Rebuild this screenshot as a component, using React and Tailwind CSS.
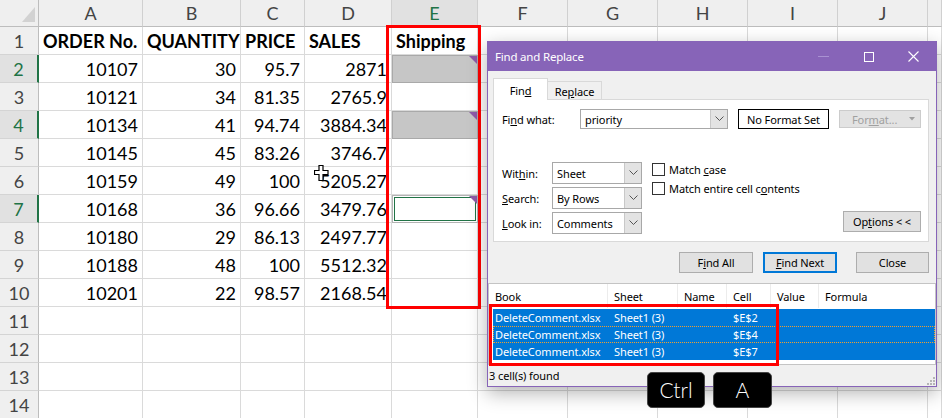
import React from 'react';

const HEADERS = ['A', 'B', 'C', 'D', 'E', 'F', 'G', 'H', 'I', 'J', ''];
const DATA = [
  ['ORDER No.', 'QUANTITY', 'PRICE', 'SALES', 'Shipping'],
  ['10107', '30', '95.7', '2871'],
  ['10121', '34', '81.35', '2765.9'],
  ['10134', '41', '94.74', '3884.34'],
  ['10145', '45', '83.26', '3746.7'],
  ['10159', '49', '100', '5205.27'],
  ['10168', '36', '96.66', '3479.76'],
  ['10180', '29', '86.13', '2497.77'],
  ['10188', '48', '100', '5512.32'],
  ['10201', '22', '98.57', '2168.54'],
];
const SELECTED_ROWS = [2, 4, 7];

function Triangle() {
  return (
    <svg className="absolute right-0 top-0" width="8" height="8" viewBox="0 0 8 8">
      <polygon points="0,0 8,0 8,8" fill="#8e5aa8" />
    </svg>
  );
}

function ECell({ r }) {
  if (r === 2 || r === 4) {
    return (
      <div className="relative bg-[#c6c6c6] border border-[#a9a9a9]">
        <Triangle />
      </div>
    );
  }
  if (r === 7) {
    return (
      <div className="relative border border-[#b4b4b4] p-px">
        <div className="h-full border border-[#217346]" />
        <Triangle />
      </div>
    );
  }
  if (r === 1) {
    return (
      <div className="border-r border-b border-[#dadada] flex items-center pl-[4px] pt-[2px] font-bold">Shipping</div>
    );
  }
  return <div className="border-r border-b border-[#dadada]" />;
}

function Sheet() {
  const rows = [];
  for (let r = 1; r <= 14; r++) {
    const sel = SELECTED_ROWS.includes(r);
    const vals = DATA[r - 1] || [];
    rows.push(
      <div
        key={'h' + r}
        className={
          sel
            ? 'flex items-center justify-center pt-[2px] bg-[#e1e1e1] text-[#217346] border-r-2 border-r-[#217346] border-b border-b-[#d4d4d4]'
            : 'flex items-center justify-center pt-[2px] bg-[#efefef] text-[#444] border-r border-r-[#bdbdbd] border-b border-b-[#d4d4d4]'
        }
      >
        {r}
      </div>
    );
    for (let c = 0; c < 11; c++) {
      if (c === 4) {
        rows.push(<ECell key={r + '-' + c} r={r} />);
        continue;
      }
      const v = vals[c];
      rows.push(
        <div
          key={r + '-' + c}
          className={
            r === 1
              ? 'border-r border-b border-[#dadada] flex items-center pl-[4px] pt-[2px] font-bold whitespace-nowrap overflow-hidden'
              : 'border-r border-b border-[#dadada] flex items-center justify-end pr-[4px] pt-[2px] whitespace-nowrap overflow-hidden'
          }
        >
          {v}
        </div>
      );
    }
  }
  return (
    <div className="grid grid-cols-[39px_104px_98px_64px_87px_86px_90px_90px_90px_90px_90px_14px] grid-rows-[27px_repeat(14,28px)] font-['Lato',sans-serif] text-[18px] text-black">
      <div className="relative bg-[#efefef] border-r border-r-[#bdbdbd] border-b border-b-[#bdbdbd]">
        <svg className="absolute left-0 top-0" width="39" height="27" viewBox="0 0 39 27">
          <polygon points="22,22 35,22 35,7" fill="#d2d2d2" />
        </svg>
      </div>
      {HEADERS.map((h, i) => (
        <div
          key={'c' + i}
          className={
            h === 'E'
              ? 'flex items-center justify-center pt-[1px] bg-[#e1e1e1] text-[#217346] border-r border-r-[#d0d0d0] border-b border-b-[#bdbdbd]'
              : 'flex items-center justify-center pt-[1px] bg-[#efefef] text-[#444] border-r border-r-[#d0d0d0] border-b border-b-[#bdbdbd]'
          }
        >
          {h}
        </div>
      ))}
      {rows}
    </div>
  );
}

function Chevron() {
  return (
    <svg width="9" height="6" viewBox="0 0 9 6">
      <polyline points="0.5,0.5 4.5,4.5 8.5,0.5" fill="none" stroke="#555" strokeWidth="1" />
    </svg>
  );
}

function Select({ value }) {
  return (
    <div className="w-[90px] h-[22px] border border-[#a8a8a8] bg-white flex">
      <div className="flex-1 flex items-center pl-[4px]">{value}</div>
      <div className="w-[17px] bg-[#e3e3e3] border-l border-[#c8c8c8] flex items-center justify-center">
        <Chevron />
      </div>
    </div>
  );
}

function Btn({ children, w, active }) {
  return (
    <div
      className={
        active
          ? 'h-[21px] flex items-center justify-center bg-[#e1e1e1] border-2 border-[#0078d7]'
          : 'h-[21px] flex items-center justify-center bg-[#e1e1e1] border border-[#adadad]'
      }
      style={{ width: w }}
    >
      {children}
    </div>
  );
}

function Dialog() {
  return (
    <div className="absolute left-[487px] top-[41px] w-[450px] h-[346px] border border-[#8764b8] bg-[#f0f0f0] shadow-[0_6px_18px_rgba(0,0,0,0.3)] flex flex-col font-['Noto_Sans',sans-serif] text-[11px] tracking-[-0.1px] text-black leading-none">
      <div className="h-[29px] shrink-0 bg-[#8764b8] flex items-center pl-[7px] text-white text-[11.5px] tracking-[-0.2px]">
        <span>Find and Replace</span>
        <div className="ml-auto flex h-full">
          <div className="w-[45px] flex items-center justify-center">
            <div className="w-[11px] h-px bg-[#a991d2]" />
          </div>
          <div className="w-[45px] flex items-center justify-center">
            <div className="w-[10px] h-[10px] border border-white" />
          </div>
          <div className="w-[45px] flex items-center justify-center">
            <svg width="11" height="11" viewBox="0 0 11 11">
              <path d="M0.5 0.5 L10.5 10.5 M10.5 0.5 L0.5 10.5" stroke="white" strokeWidth="1.1" />
            </svg>
          </div>
        </div>
      </div>

      <div className="pl-[5px] pr-[7px] mt-[7px]">
        <div className="flex items-end -mb-px relative z-10">
          <div className="w-[55px] h-[22px] bg-white border-t border-l border-r border-[#d9d9d9] flex items-center justify-center pt-[1px]">
            Fin<span className="underline">d</span>
          </div>
          <div className="w-[54px] h-[19px] bg-[#f0f0f0] border-t border-r border-[#d9d9d9] border-b flex items-center justify-center pt-[1px]">
            Re<span className="underline">p</span>lace
          </div>
        </div>
        <div className="h-[143px] bg-white border border-[#d9d9d9] pt-[9px] pl-[8px]">
          <div className="flex items-center h-[20px]">
            <div className="w-[78px]">
              Fi<span className="underline">n</span>d what:
            </div>
            <div className="w-[148px] h-[20px] border border-[#a8a8a8] flex">
              <div className="flex-1 flex items-center pl-[4px]">priority</div>
              <div className="w-[17px] bg-[#e3e3e3] border-l border-[#c8c8c8] flex items-center justify-center">
                <Chevron />
              </div>
            </div>
            <div className="ml-[10px] w-[91px] h-[20px] border border-black flex items-center justify-center">No Format Set</div>
            <div className="ml-[10px] w-[82px] h-[18px] bg-[#e3e3e3] border border-[#cccccc] flex items-center pl-[12px] text-[#a0a0a0]">
              <span>
                For<span className="underline">m</span>at...
              </span>
              <svg className="ml-auto mr-[5px]" width="6" height="4" viewBox="0 0 6 4">
                <polygon points="0,0 6,0 3,3.5" fill="#a0a0a0" />
              </svg>
            </div>
          </div>

          <div className="flex mt-[33px]">
            <div className="flex flex-col gap-[3px]">
              <div className="flex items-center">
                <div className="w-[50px]">
                  Wit<span className="underline">h</span>in:
                </div>
                <Select value="Sheet" />
              </div>
              <div className="flex items-center">
                <div className="w-[50px]">
                  <span className="underline">S</span>earch:
                </div>
                <Select value="By Rows" />
              </div>
              <div className="flex items-center">
                <div className="w-[50px]">
                  <span className="underline">L</span>ook in:
                </div>
                <Select value="Comments" />
              </div>
            </div>
            <div className="ml-[10px] pt-[1px] flex flex-col gap-[6px]">
              <div className="flex items-center">
                <div className="w-[13px] h-[13px] border border-[#333] bg-white" />
                <span className="ml-[4px]">
                  Match <span className="underline">c</span>ase
                </span>
              </div>
              <div className="flex items-center">
                <div className="w-[13px] h-[13px] border border-[#333] bg-white" />
                <span className="ml-[4px]">
                  Match entire cell c<span className="underline">o</span>ntents
                </span>
              </div>
            </div>
            <div className="ml-auto mr-[7px] self-end mb-[2px]">
              <Btn w={78}>
                Op<span className="underline">t</span>ions &lt; &lt;
              </Btn>
            </div>
          </div>
        </div>

        <div className="flex justify-end mt-[10px]">
          <Btn w={74}>
            F<span className="underline">i</span>nd All
          </Btn>
          <div className="ml-[10px]">
            <Btn w={74} active>
              <span className="underline">F</span>ind Next
            </Btn>
          </div>
          <div className="ml-[19px]">
            <Btn w={73}>Close</Btn>
          </div>
        </div>
      </div>

      <div className="mt-[10px] h-[82px] shrink-0 bg-white border border-[#c4c4c4] flex flex-col">
        <div className="h-[24px] flex">
          <div className="w-[119px] pl-[6px] flex items-center border-r border-[#ececec]">Book</div>
          <div className="w-[70px] pl-[6px] flex items-center border-r border-[#ececec]">Sheet</div>
          <div className="w-[49px] pl-[6px] flex items-center border-r border-[#ececec]">Name</div>
          <div className="w-[44px] pl-[6px] flex items-center border-r border-[#ececec]">Cell</div>
          <div className="w-[48px] pl-[6px] flex items-center border-r border-[#ececec]">Value</div>
          <div className="flex-1 pl-[6px] flex items-center">Formula</div>
        </div>
        <div className="mt-px ml-[4px] flex flex-col text-white">
          {['$E$2', '$E$4', '$E$7'].map((c, i) => (
            <div
              key={c}
              className={
                i === 1
                  ? 'h-[17px] flex bg-[#0078d7] outline-1 outline-dotted outline-[#f0a030] -outline-offset-1'
                  : 'h-[17px] flex bg-[#0078d7]'
              }
            >
              <div className="w-[115px] pl-[2px] flex items-center">DeleteComment.xlsx</div>
              <div className="w-[70px] pl-[6px] flex items-center">Sheet1 (3)</div>
              <div className="w-[49px]" />
              <div className="w-[44px] pl-[6px] flex items-center">{c}</div>
            </div>
          ))}
        </div>
      </div>

      <div className="relative flex-1 flex items-center pl-[1px]">
        3 cell(s) found
        <svg className="absolute right-[1px] bottom-[1px]" width="8" height="8" viewBox="0 0 8 8">
          <rect x="6" y="0" width="2" height="2" fill="#b5b5b5" />
          <rect x="3" y="3" width="2" height="2" fill="#b5b5b5" />
          <rect x="6" y="3" width="2" height="2" fill="#b5b5b5" />
          <rect x="0" y="6" width="2" height="2" fill="#b5b5b5" />
          <rect x="3" y="6" width="2" height="2" fill="#b5b5b5" />
          <rect x="6" y="6" width="2" height="2" fill="#b5b5b5" />
        </svg>
      </div>
    </div>
  );
}

export default function App() {
  return (
    <div className="relative w-[942px] h-[418px] overflow-hidden bg-white">
      <Sheet />

      {/* red highlight around column E */}
      <div className="absolute left-[386px] top-[25px] w-[95px] h-[284px] border-[3px] border-[#ff0000]" />

      {/* move cursor */}
      <svg className="absolute left-[314px] top-[165px]" width="15" height="16" viewBox="0 0 15 16">
        <path d="M5 0.5h4v5h5v4h-5v6h-4v-6h-4.5v-4h4.5z" fill="white" stroke="black" strokeWidth="1.2" />
      </svg>

      <Dialog />

      {/* red highlight around results */}
      <div className="absolute left-[489px] top-[304px] w-[290px] h-[62px] border-[3px] border-[#ff0000]" />

      {/* keys */}
      <div className="absolute left-[647px] top-[372px] w-[58px] h-[36px] rounded-[5px] bg-black border border-[#444] flex items-center justify-center text-white font-['Lato',sans-serif] font-light text-[21px]">
        Ctrl
      </div>
      <div className="absolute left-[713px] top-[372px] w-[59px] h-[36px] rounded-[5px] bg-black border border-[#444] flex items-center justify-center text-white font-['Lato',sans-serif] font-light text-[21px]">
        A
      </div>
    </div>
  );
}
